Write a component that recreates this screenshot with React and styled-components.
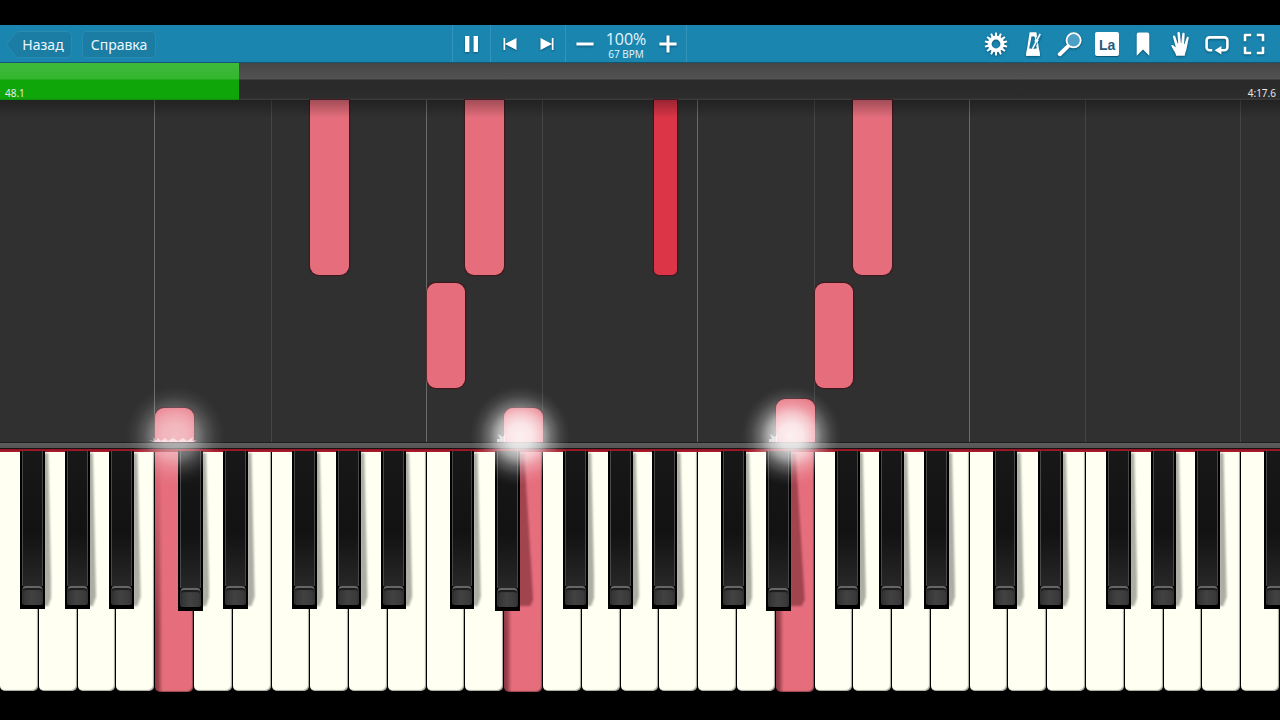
import React, { useState } from "react"
import styled, { createGlobalStyle } from "styled-components"

const GlobalStyle = createGlobalStyle`
  * {
    box-sizing: border-box;
  }
  body {
    margin: 0;
    background: #000;
    font-family: "Open Sans", "Noto Sans", sans-serif;
  }
`

const Page = styled.div`
  display: flex;
  flex-direction: column;
  min-height: 100vh;
  padding: 25px 0 29px;
  overflow: hidden;
  background: #000;
`

const Toolbar = styled.header`
  display: flex;
  justify-content: space-between;
  height: 38px;
  padding: 0 8px 0 5px;
  background: #1a86b0;
  border-bottom: 1px solid #12566f;
  color: #fff;
`

const Group = styled.div`
  display: flex;
  align-items: center;
`

const NavGroup = styled(Group)`
  gap: 10px;
  padding: 2px 5px 0 0;
`

const NavButton = styled.button`
  position: relative;
  height: 27px;
  width: ${props => (props.$back ? "67px" : "74px")};
  padding: ${props => (props.$back ? "0 0 0 9px" : "0")};
  border: ${props => (props.$back ? "0" : "1px solid #2a8bb1")};
  border-radius: 4px;
  background: ${props => (props.$back ? "none" : "#1b7ca4")};
  color: #eaf8ff;
  font-family: "Noto Sans", "Open Sans", sans-serif;
  font-size: 14px;
  line-height: 25px;
`

const BackShape = styled.svg`
  position: absolute;
  inset: 0;
`

const Label = styled.span`
  position: relative;
`

const Section = styled(Group)`
  height: 37px;
  border-left: 1px solid #3393b9;
  &:last-child {
    border-right: 1px solid #3393b9;
  }
`

const IconButton = styled.button`
  display: flex;
  align-items: center;
  justify-content: center;
  width: ${props => (props.$fill ? "100%" : "37px")};
  height: 37px;
  padding: 0;
  border: 0;
  background: none;
  color: #fff;
  svg {
    filter: drop-shadow(0 1px 1px rgba(0, 50, 75, 0.6));
  }
`

const Tempo = styled.div`
  display: flex;
  flex-direction: column;
  align-items: center;
  width: 46px;
  padding-top: 3px;
  color: #e3f6ff;
`

const Percent = styled.span`
  font-size: 16px;
  line-height: 17px;
`

const Bpm = styled.span`
  font-size: 10px;
  line-height: 12px;
`

const Tools = styled.div`
  display: grid;
  grid-template-columns: repeat(8, 1fr);
  width: 294px;
`

const NoteName = styled.span`
  width: 24px;
  height: 24px;
  padding-left: 1px;
  border-radius: 2px;
  background: #fff;
  box-shadow: 0 1px 1px rgba(0, 50, 75, 0.6);
  color: #1f5c7c;
  font-size: 14px;
  font-weight: 700;
  line-height: 27px;
  text-align: center;
`

const Progress = styled.div`
  position: relative;
  display: flex;
  align-items: flex-end;
  justify-content: space-between;
  height: 37px;
  padding: 0 4px 0 5px;
  background: linear-gradient(#464646, #525252 16px, #2a2a2a 17px, #2c2c2c 35px, #3a3a3a 36px);
  color: #e8e8e8;
  font-family: "Noto Sans", "Open Sans", sans-serif;
  font-size: 10px;
  line-height: 14px;
`

const Fill = styled.div`
  position: absolute;
  left: 0;
  top: 0;
  bottom: 0;
  background: linear-gradient(#3fb93c, #34b62f 16px, #0fa60a 17px, #0fa60a 35px, #108d0c);
`

const Time = styled.span`
  position: relative;
`

const Roll = styled.main`
  position: relative;
  flex: 10 1 0;
  display: grid;
  grid-template-columns: repeat(33, 1fr);
  background: #303030;
  &::after {
    content: "";
    position: absolute;
    top: 0;
    left: 0;
    right: 0;
    height: 18px;
    background: linear-gradient(rgba(0, 0, 0, 0.3), rgba(0, 0, 0, 0));
  }
`

const lineColors = { octave: "#6a6a6a", soft: "#464646", none: "transparent" }

const Lane = styled.div`
  position: relative;
  border-right: 1px solid ${props => lineColors[props.$line]};
`

const Note = styled.div`
  position: absolute;
  left: ${props => (props.$sharp ? "89%" : "0")};
  width: ${props => (props.$sharp ? "61%" : "calc(100% + 1px)")};
  border-radius: ${props => (props.$sharp ? "5px" : "9px")};
  ${props => props.$cut && "border-top-left-radius: 0; border-top-right-radius: 0;"}
  ${props => props.$playing && "border-bottom-left-radius: 0; border-bottom-right-radius: 0;"}
  background: ${props => (props.$sharp ? "#dc3548" : "#e66e7c")};
  box-shadow: 0 0 1px 1px rgba(72, 12, 20, 0.7);
`

const Glow = styled.div`
  position: absolute;
  z-index: 4;
  left: 50%;
  bottom: -44px;
  width: 100px;
  height: 100px;
  margin-left: ${props => (props.$strong ? "-54px" : "-50px")};
  opacity: ${props => (props.$strong ? 1 : 0.6)};
  background: radial-gradient(
    closest-side,
    rgba(255, 255, 255, 0.9),
    rgba(255, 255, 255, 0.82) 25%,
    rgba(255, 255, 255, 0.6) 45%,
    rgba(255, 255, 255, 0.3) 62%,
    rgba(255, 255, 255, 0.1) 80%,
    rgba(255, 255, 255, 0.03) 92%,
    rgba(255, 255, 255, 0)
  );
  pointer-events: none;
`

const Spark = styled.svg`
  position: absolute;
  z-index: 5;
  left: -7px;
  bottom: 0;
`

const Rail = styled.div`
  height: 10px;
  background: linear-gradient(
    #1f1f1f 1px,
    #5c5c5c 1px,
    #555 6px,
    #181416 6px,
    #181416 7px,
    #8c1422 7px,
    #b01d2d 10px
  );
`

const Keyboard = styled.section`
  flex: 7 1 0;
  display: grid;
  grid-template-columns: repeat(33, 1fr);
`

const Slot = styled.div`
  position: relative;
  display: flex;
  padding-right: 1px;
`

const WhiteKey = styled.button`
  flex: 1;
  padding: 0;
  border: 0;
  border-radius: 0 0 5px 5px;
  margin-bottom: ${props => (props.$down ? "-1px" : "0")};
  background: ${props =>
    props.$down
      ? "linear-gradient(rgba(230, 110, 124, 1), rgba(230, 110, 124, 0) 75%), linear-gradient(90deg, rgba(80, 20, 30, 0.6), rgba(80, 20, 30, 0.5) 3px, rgba(80, 20, 30, 0) 8px), #e66e7c"
      : "#fffff2"};
  box-shadow: inset -1px -1px 1px rgba(0, 0, 0, 0.35);
`

const BlackKey = styled.button`
  position: absolute;
  z-index: 2;
  top: -1px;
  left: ${props => props.$left}%;
  width: 64%;
  height: ${props => (props.$sunk ? "67%" : "66%")};
  padding: 0 2px 4px;
  border: 0;
  background: #000;
  display: flex;
  flex-direction: column;
`

// the blur sits on a wrapper, so it comes after the slanted clip
const Soft = styled.span`
  position: absolute;
  z-index: 1;
  inset: 0;
  filter: blur(1px);
  pointer-events: none;
`

const KeyShadow = styled.span`
  position: absolute;
  top: 1px;
  left: ${props => props.$left + 60}%;
  width: ${props => (props.$deep ? "15px" : "8px")};
  height: 64%;
  background: ${props => (props.$deep ? "rgba(70, 10, 20, 0.42)" : "rgba(0, 0, 0, 0.32)")};
  clip-path: ${props =>
    props.$deep
      ? "polygon(0 0, 40% 0, 100% 96%, 80% 100%, 0 100%)"
      : "polygon(0 0, 60% 0, 100% 94%, 60% 100%, 0 100%)"};
`

const KeyBody = styled.span`
  flex: 1;
  border: solid #484848;
  border-width: 0 1px;
  background: linear-gradient(#181818, #121212 60%, #272727);
`

const KeyCap = styled.span`
  height: 19px;
  border: solid #333;
  border-width: 0 1px;
  background: linear-gradient(90deg, #333, #424242 45%, #383838);
  border-top: 2px solid #666;
  border-radius: 4px 4px 2px 2px;
  box-shadow: inset 0 2px 1px #1c1c1c;
`

// the keyboard starts on F, so these are the steps from F up to E
const NAMES = ["F", "G", "A", "B", "C", "D", "E"]
const SHARPS = { F: 52, G: 67, A: 82, C: 59, D: 76 }
const KEYS = Array.from({ length: 33 }, (_, i) => NAMES[i % 7])
const PRESSED = [4, 13, 20]

// from and to are in percent of the roll, counted from the keys up
const NOTES = [
  { lane: 4, from: 0, to: 10 },
  { lane: 8, from: 48.8, to: 100 },
  { lane: 11, from: 15.8, to: 46.5 },
  { lane: 12, from: 48.8, to: 100 },
  { lane: 13, from: 0, to: 10, strong: true },
  { lane: 16, from: 48.8, to: 100, sharp: true },
  { lane: 20, from: 0, to: 12.5, strong: true },
  { lane: 21, from: 15.8, to: 46.5 },
  { lane: 22, from: 48.8, to: 100 },
]

const ELAPSED = 48.1
const TOTAL = 257.6

const lineFor = i => {
  if (KEYS[i + 1] === "C") return i < 31 ? "octave" : "soft"
  if (KEYS[i + 1] === "F") return "soft"
  return "none"
}

const Icon = ({ children }) => (
  <svg width="26" height="26" viewBox="0 0 26 26" fill="currentColor" aria-hidden="true">
    {children}
  </svg>
)

const Gear = () => (
  <Icon>
    {Array.from({ length: 14 }, (_, i) => (
      <path key={i} d="M11.700 6 12.100 1.600h1.800l.4 4.400z" transform={`rotate(${(i * 360) / 14} 13 13)`} />
    ))}
    <circle cx="13" cy="13" r="6.300" fill="none" stroke="currentColor" strokeWidth="3.800" />
  </Icon>
)

const Metronome = () => (
  <Icon>
    <path fillRule="evenodd" d="M9.600 1.200h6.800L20 24.800H6zM11.500 5.500 9.200 17.600h7.600L14.500 5.500z" />
    <path d="M12.400 18 20 3.300" fill="none" stroke="#1b86b0" strokeWidth="3.600" />
    <path d="M12.400 18 20.200 2.800" fill="none" stroke="currentColor" strokeWidth="1.600" />
    <path d="m15.700 7.500 3 1.500-1.400 2.800-3-1.500z" />
    <path d="M7 18h12l1 6.800H6z" />
  </Icon>
)

const Magnifier = () => (
  <Icon>
    <path d="m2.800 23.200 8.400-8.100" stroke="currentColor" strokeWidth="4" strokeLinecap="round" />
    <circle cx="16.600" cy="9.300" r="7.100" fill="#4d9fc5" stroke="currentColor" strokeWidth="1.800" />
  </Icon>
)

const Bookmark = () => (
  <Icon>
    <path d="M6.700 3.600a2 2 0 0 1 2-2h8.600a2 2 0 0 1 2 2v21.200L13 18.600l-6.300 6.200z" />
  </Icon>
)

const Hand = () => (
  <Icon>
    <path d="M9.200 24.800c-.3-2.100-1.500-3.600-2.600-5.500-1.100-2-2.700-4.400-2.200-5 .9-1 2.800.2 4.100 2l.2-.6L6 6.300c-.5-1.900 1.700-2.500 2.300-.7l2.400 6.800.5-.1L10.400 2.600c0-1.900 2.300-2 2.600-.1l.9 9.500h.4l.9-9c.3-1.800 2.600-1.500 2.500.3l-.6 9.800.4.200 2.100-6.600c.6-1.600 2.500-1.100 2.100.6l-1.900 9.300c-.4 3.500-1.700 4.600-2.100 8.200z" />
  </Icon>
)

const Loop = () => (
  <Icon>
    <path
      d="M8.200 19.300H5.600a3 3 0 0 1-3-3V9.400a3 3 0 0 1 3-3h14.800a3 3 0 0 1 3 3v6.900a3 3 0 0 1-3 3H16"
      fill="none"
      stroke="currentColor"
      strokeWidth="2.600"
    />
    <path d="m10.600 19.300 6.800-4.200v8.400z" />
  </Icon>
)

const Fullscreen = () => (
  <Icon>
    <path
      d="M4 10.200V4h6.200M15.800 4H22v6.200M22 15.800V22h-6.200M10.200 22H4v-6.200"
      fill="none"
      stroke="currentColor"
      strokeWidth="2.600"
      strokeLinejoin="round"
    />
  </Icon>
)

const tools = [
  { name: "Настройки", icon: <Gear /> },
  { name: "Метроном", icon: <Metronome /> },
  { name: "Масштаб", icon: <Magnifier /> },
  { name: "Названия нот", icon: <NoteName>La</NoteName> },
  { name: "Закладка", icon: <Bookmark /> },
  { name: "Руки", icon: <Hand /> },
  { name: "Повтор", icon: <Loop /> },
  { name: "Во весь экран", icon: <Fullscreen /> },
]

const App = () => {
  const [speed, setSpeed] = useState(100)

  return (
    <Page>
      <GlobalStyle />
      <Toolbar>
        <NavGroup>
          <NavButton $back>
            <BackShape width="67" height="27" viewBox="0 0 67 27" aria-hidden="true">
              <path
                d="M1.500 13.500 10 2.800Q11.600 .5 14 .5h48.500a4 4 0 0 1 4 4v18a4 4 0 0 1-4 4H14q-2.400 0-4-2.300z"
                fill="#1b7ca4"
                stroke="#2a8bb1"
              />
            </BackShape>
            <Label>Назад</Label>
          </NavButton>
          <NavButton>Справка</NavButton>
        </NavGroup>

        <Group>
          <Section>
            <IconButton aria-label="Пауза">
              <Icon>
                <path d="M6 5h4.400v16H6zM14.600 5H19v16h-4.400z" />
              </Icon>
            </IconButton>
          </Section>
          <Section>
            <IconButton aria-label="В начало">
              <Icon>
                <path d="M6.500 7h1.700v12H6.500zM19.500 7v12L8 13z" />
              </Icon>
            </IconButton>
            <IconButton aria-label="Вперёд">
              <Icon>
                <path d="M17.800 7h1.700v12h-1.700zM6.500 7v12L18 13z" />
              </Icon>
            </IconButton>
          </Section>
          <Section>
            <IconButton aria-label="Медленнее" onClick={() => setSpeed(speed - 1)}>
              <Icon>
                <path d="M4.400 11.500h17.200v3H4.400z" />
              </Icon>
            </IconButton>
            <Tempo>
              <Percent>{`${speed}%`}</Percent>
              <Bpm>{`${Math.round(speed * 0.67)} BPM`}</Bpm>
            </Tempo>
            <IconButton aria-label="Быстрее" onClick={() => setSpeed(speed + 1)}>
              <Icon>
                <path d="M4.400 11.500h7.100V4.600h3v6.900h7.100v3h-7.100v7h-3v-7H4.400z" />
              </Icon>
            </IconButton>
          </Section>
        </Group>

        <Tools>
          {tools.map(tool => (
            <IconButton key={tool.name} aria-label={tool.name} $fill>
              {tool.icon}
            </IconButton>
          ))}
        </Tools>
      </Toolbar>

      <Progress role="progressbar" aria-valuenow={ELAPSED} aria-valuemax={TOTAL}>
        <Fill style={{ width: `${(ELAPSED / TOTAL) * 100}%` }} />
        <Time>48.1</Time>
        <Time>4:17.6</Time>
      </Progress>

      <Roll>
        {KEYS.map((key, i) => (
          <Lane key={i} $line={lineFor(i)}>
            {NOTES.filter(note => note.lane === i).map(note => (
              <Note
                key={note.from}
                $sharp={note.sharp}
                $cut={note.to === 100}
                $playing={note.from === 0}
                style={{ bottom: `${note.from}%`, height: `${note.to - note.from}%` }}
              >
                {note.from === 0 && (
                  <>
                    <Glow $strong={note.strong} />
                    <Spark width="52" height="12" viewBox="0 0 52 12" aria-hidden="true">
                      <path
                        d={
                          note.strong
                            ? "M0 12V9l3 0-2-5 5 3 2-3v8z"
                            : "M1 10l5 1-1-4 3 4 2-3 3 3 4-3 3 3 5-3 5 3 5-3 4 3 6-4-1 4 5-1-3 2H6z"
                        }
                        fill="#fff"
                        opacity="0.6"
                      />
                    </Spark>
                  </>
                )}
              </Note>
            ))}
          </Lane>
        ))}
      </Roll>

      <Rail />

      <Keyboard aria-label="Клавиатура">
        {KEYS.map((key, i) => (
          <Slot key={i}>
            <WhiteKey aria-label={key} $down={PRESSED.includes(i)} />
            {SHARPS[key] && (
              <>
                <Soft>
                  <KeyShadow $left={SHARPS[key]} $deep={PRESSED.includes(i + 1)} />
                </Soft>
                <BlackKey
                  aria-label={`${key}#`}
                  $left={SHARPS[key]}
                  $sunk={PRESSED.includes(i) || PRESSED.includes(i + 1)}
                >
                  <KeyBody />
                  <KeyCap />
                </BlackKey>
              </>
            )}
          </Slot>
        ))}
      </Keyboard>
    </Page>
  )
}

export default App
